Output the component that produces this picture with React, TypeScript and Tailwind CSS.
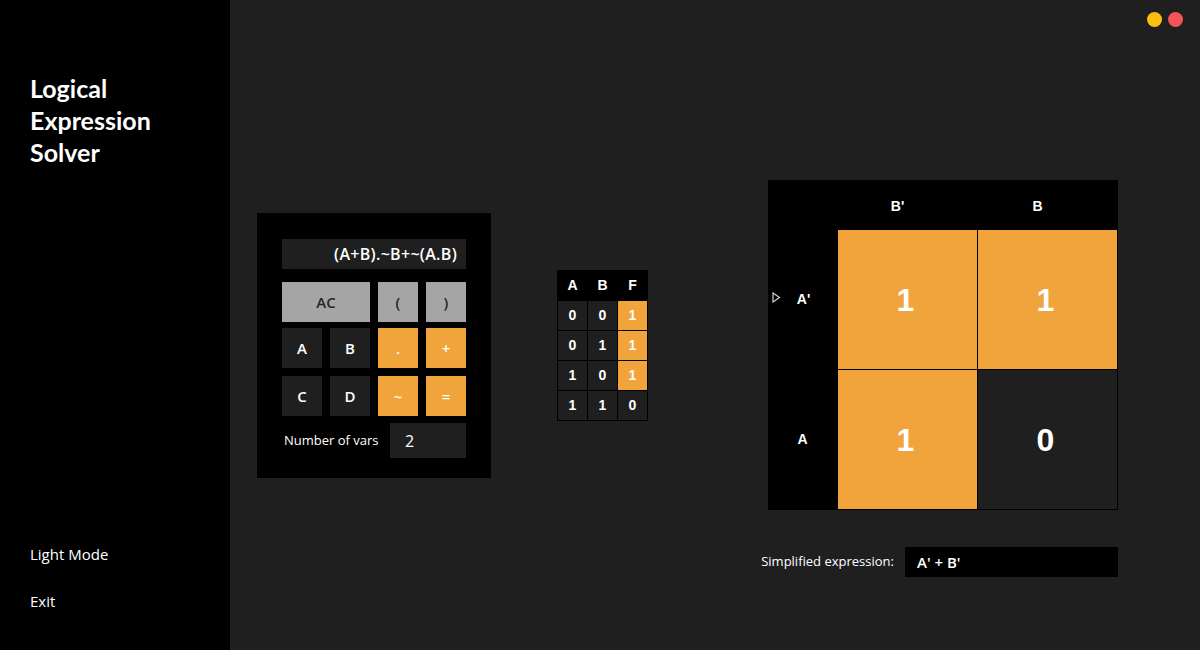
import type { ReactNode } from 'react'

const ui = { fontFamily: '"Open Sans", "Noto Sans", sans-serif' }
const grid = { fontFamily: '"Liberation Sans", Arial, sans-serif' }

type Tone = 'gray' | 'dark' | 'orange'

function Key({ label, tone, wide }: { label: string; tone: Tone; wide?: boolean }) {
  const tones: Record<Tone, string> = {
    gray: 'bg-[#a5a5a5] text-[#262626]',
    dark: 'bg-[#1f1f1f] text-white',
    orange: 'bg-[#f1a33c] text-white',
  }
  return (
    <button
      className={`${wide ? 'col-span-2' : ''} h-10 flex items-center justify-center text-[15px] font-semibold ${tones[tone]}`}
    >
      {label}
    </button>
  )
}

function Calculator() {
  return (
    <div className="w-[234px] h-[265px] bg-black pt-[26px] pl-[25px] pr-[25px]">
      <div className="h-[30px] bg-[#1f1f1f] flex items-center justify-end pr-[9px] text-[16px] font-semibold text-white tracking-[0.3px]">
        (A+B).~B+~(A.B)
      </div>
      <div className="mt-[13px] grid grid-cols-[40px_40px_40px_40px] gap-x-2">
        <Key label="AC" tone="gray" wide />
        <Key label="(" tone="gray" />
        <Key label=")" tone="gray" />
      </div>
      <div className="mt-[6px] grid grid-cols-[40px_40px_40px_40px] gap-x-2 gap-y-2">
        <Key label="A" tone="dark" />
        <Key label="B" tone="dark" />
        <Key label="." tone="orange" />
        <Key label="+" tone="orange" />
        <Key label="C" tone="dark" />
        <Key label="D" tone="dark" />
        <Key label="~" tone="orange" />
        <Key label="=" tone="orange" />
      </div>
      <div className="mt-[7px] flex items-center justify-between">
        <span className="pl-[2px] text-[13px] text-white">Number of vars</span>
        <div className="w-[76px] h-[35px] bg-[#1f1f1f] flex items-center pl-[15px] text-[16px] text-white">
          2
        </div>
      </div>
    </div>
  )
}

const rows = [
  [0, 0, 1],
  [0, 1, 1],
  [1, 0, 1],
  [1, 1, 0],
]

function TruthTable() {
  return (
    <div className="bg-black p-px grid grid-cols-[29px_29px_29px] auto-rows-[29px] gap-px text-[14px] font-bold text-white" style={grid}>
      {['A', 'B', 'F'].map((h) => (
        <div key={h} className="h-[28px] flex items-center justify-center bg-black">
          {h}
        </div>
      ))}
      {rows.flatMap((r, i) =>
        r.map((v, j) => (
          <div
            key={`${i}-${j}`}
            className={`flex items-center justify-center ${j === 2 && v === 1 ? 'bg-[#f1a33c]' : 'bg-[#1f1f1f]'}`}
          >
            {v}
          </div>
        )),
      )}
    </div>
  )
}

function Cell({ on, children }: { on: boolean; children: ReactNode }) {
  return (
    <div
      className={`flex items-center justify-center pr-[4px] text-[32px] font-bold text-white ${on ? 'bg-[#f1a33c]' : 'bg-[#1f1f1f]'}`}
    >
      {children}
    </div>
  )
}

function KMap() {
  return (
    <div
      className="w-[350px] h-[330px] bg-black pr-px pb-px grid grid-cols-[69px_139px_139px] grid-rows-[49px_139px_139px] gap-px text-white"
      style={grid}
    >
      <div />
      <div className="flex items-center justify-center text-[14px] font-bold pt-[3px] pr-[20px]">B'</div>
      <div className="flex items-center justify-center text-[14px] font-bold pt-[3px] pr-[20px]">B</div>
      <div className="relative flex items-center justify-center text-[14px] font-bold">
        <svg className="absolute left-[4px] top-[62px]" width="9" height="11" viewBox="0 0 9 11">
          <path d="M1 1 L7.5 5.5 L1 10 Z" fill="none" stroke="#d0d0d0" strokeWidth="1.2" />
        </svg>
        <span className="pl-[2px]">A'</span>
      </div>
      <Cell on>1</Cell>
      <Cell on>1</Cell>
      <div className="flex items-center justify-center text-[14px] font-bold">A</div>
      <Cell on>1</Cell>
      <Cell on={false}>0</Cell>
    </div>
  )
}

export default function App() {
  return (
    <div className="w-[1200px] h-[650px] flex bg-[#1f1f1f] overflow-hidden" style={ui}>
      <aside className="w-[230px] shrink-0 bg-black flex flex-col pl-[30px] text-white">
        <h1 className="mt-[72px] text-[25px] leading-[32px] font-bold" style={{ fontFamily: 'Lato, "Open Sans", sans-serif' }}>
          Logical
          <br />
          Expression
          <br />
          Solver
        </h1>
        <div className="mt-auto mb-[38px] flex flex-col gap-[26px] text-[15px]">
          <span className="leading-[21px]">Light Mode</span>
          <span className="leading-[21px]">Exit</span>
        </div>
      </aside>
      <main className="flex-1 flex flex-col">
        <div className="h-10 flex justify-end items-start pt-[12px] pr-[17px] gap-[6px]">
          <span className="w-[15px] h-[15px] rounded-full bg-[#ffbf10]" />
          <span className="w-[15px] h-[15px] rounded-full bg-[#f25457]" />
        </div>
        <div className="flex items-start pl-[27px]">
          <div className="mt-[173px]">
            <Calculator />
          </div>
          <div className="mt-[230px] ml-[66px]">
            <TruthTable />
          </div>
          <div className="mt-[140px] ml-[120px] w-[350px] flex flex-col">
            <KMap />
            <div className="mt-[37px] flex items-center justify-end gap-[11px]">
              <span className="shrink-0 whitespace-nowrap text-[13px] text-white">Simplified expression:</span>
              <div className="shrink-0 w-[213px] h-[30px] bg-black flex items-center pl-[12px] text-[15px] font-semibold text-white">
                A' + B'
              </div>
            </div>
          </div>
        </div>
      </main>
    </div>
  )
}
